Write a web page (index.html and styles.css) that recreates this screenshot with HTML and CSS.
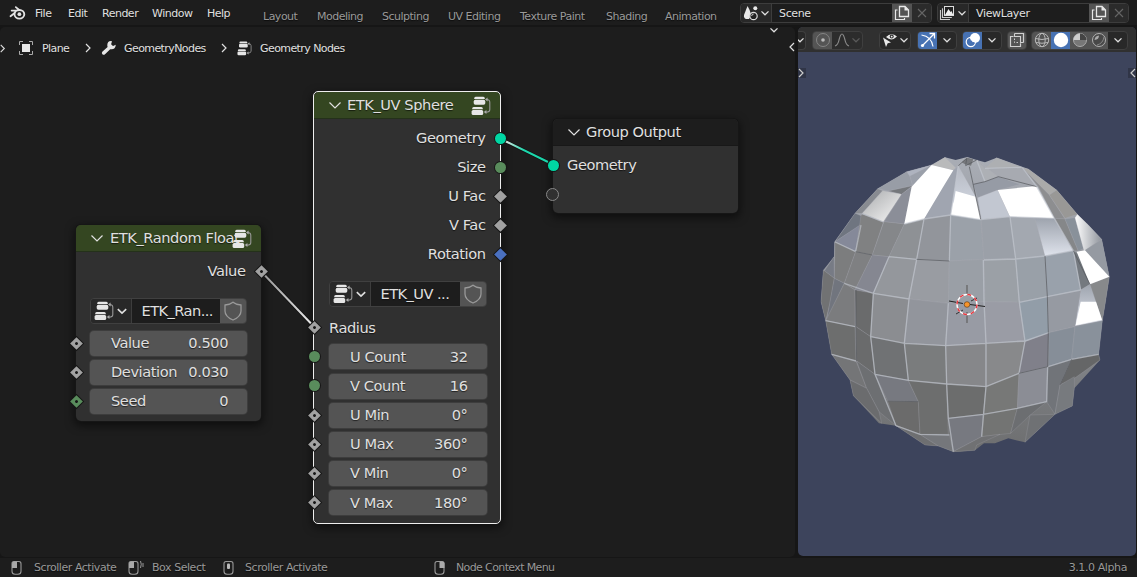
FILE: index.html
```html
<!DOCTYPE html>
<html lang="en">
<head>
<meta charset="utf-8">
<title>Geometry Nodes</title>
<link rel="stylesheet" href="styles.css">
</head>
<body>
<svg class="defs" width="0" height="0">
  <symbol id="chev" viewBox="0 0 10 10"><path d="M1.5 3.4 5 6.8 8.500 3.400" fill="none" stroke="currentColor" stroke-width="1.3"/></symbol>
  <symbol id="fold" viewBox="0 0 16 16"><path d="M2.500 5.500 8 11 13.500 5.500" fill="none" stroke="currentColor" stroke-width="1.200"/></symbol>
  <symbol id="right" viewBox="0 0 10 10"><path d="M3 1 7 5 3 9" fill="none" stroke="currentColor" stroke-width="1.2"/></symbol>
  <symbol id="left" viewBox="0 0 10 10"><path d="M7 1 3 5 7 9" fill="none" stroke="currentColor" stroke-width="1.2"/></symbol>
  <symbol id="tree" viewBox="0 0 20 20">
    <path d="M3.200 3V2.200q0-1.500 1.500-1.500h7.600q1.500 0 1.500 1.500V3z" fill="#e6e6e6"/><rect x="2.7" y="3.8" width="11.6" height="4.900" rx="1.6" fill="#e6e6e6"/>
    <path d="M1.200 13.200v-.8q0-1.500 1.500-1.500h7.600q1.500 0 1.500 1.500v.8z" fill="#e6e6e6"/><rect x=".6" y="14" width="11.6" height="5" rx="1.6" fill="#e6e6e6"/>
    <path d="M15.200 3.5q3.600 0 3.600 2.700v7.200q0 2.700-3.900 2.700" fill="none" stroke="#999" stroke-width="1.1"/><path d="M14 3.500l2.600-2v4zM12.800 16l2.600-2v4z" fill="#aaa"/>
  </symbol>
  <symbol id="shield" viewBox="0 0 20 20"><path d="M10 1.200q3 2.500 8 2.800v6q0 5.600-8 9-8-3.400-8-9V4Q7 3.700 10 1.200z" fill="none" stroke="#999" stroke-width="1.3"/></symbol>
  <symbol id="copy" viewBox="0 0 16 16"><path d="M5.500 1.500h5.500l3.500 3.500v6.500h-9z" fill="none" stroke="#e8e8e8" stroke-width="1.300"/><path d="M10.500 1v4.500h4.500z" fill="#e8e8e8"/><path d="M3.500 5H1.500v9.500h9v-1.500" fill="none" stroke="#e8e8e8" stroke-width="1.200"/></symbol>
  <symbol id="cross" viewBox="0 0 12 12"><path d="M2 2l8 8M10 2l-8 8" stroke="#656565" stroke-width="1.100"/></symbol>
  <symbol id="mouse" viewBox="0 0 12 16"><path d="M3 1.500h5q2 0 2 2.200v7.500q0 3-3 3H4q-3 0-3-3V3.700q0-2.200 2-2.200z" fill="none" stroke="#999" stroke-width="1.100"/></symbol>
</svg>

<header class="topbar">
  <svg class="logo" viewBox="0 0 18 16"><path d="M7.200 1.800l6 4.800M2.800 5.400h8M1.600 11.400l7.400-5.800" stroke="#e3e3e3" stroke-width="1.900" stroke-linecap="round"/><ellipse cx="11" cy="9.400" rx="5.200" ry="4.600" fill="#1d1d1d" stroke="#e3e3e3" stroke-width="2"/><circle cx="11" cy="9.300" r="2" fill="#e3e3e3"/></svg>
  <nav class="menu"><span>File</span><span>Edit</span><span>Render</span><span>Window</span><span>Help</span></nav>
  <nav class="tabs"><span>Layout</span><span>Modeling</span><span>Sculpting</span><span>UV Editing</span><span>Texture Paint</span><span>Shading</span><span>Animation</span></nav>
  <div class="idbox scene">
    <span class="seg pick"><svg width="17" height="16" viewBox="0 0 17 16"><path d="M5.500 1Q9 7 9 10.500L7 14H4Q1.500 13 2 10z" fill="#e8e8e8"/><circle cx="13.300" cy="3.300" r="2" fill="#e8e8e8"/><circle cx="11.500" cy="11" r="3.700" fill="#222" stroke="#ddd" stroke-width="1.200"/><path d="M9.700 11a2 2 0 0 1 2-2" stroke="#ccc" fill="none"/></svg><svg class="c10"><use href="#chev"/></svg></span>
    <span class="seg name">Scene</span><span class="seg btn"><svg width="16" height="16"><use href="#copy"/></svg></span><span class="seg off"><svg width="12" height="12"><use href="#cross"/></svg></span>
  </div>
  <div class="idbox">
    <span class="seg pick"><svg width="17" height="16" viewBox="0 0 17 16"><path d="M1.500 5v9.500h9.500M3.500 3.200v9.300h9.300" fill="none" stroke="#ccc" stroke-width="1.100"/><rect x="5.500" y="1.500" width="9" height="9" fill="#222" stroke="#ddd"/><path d="M6 10l3.500-6 2 3 1-1 1.800 4z" fill="#eee"/></svg><svg class="c10"><use href="#chev"/></svg></span>
    <span class="seg name">ViewLayer</span><span class="seg btn"><svg width="16" height="16"><use href="#copy"/></svg></span><span class="seg off"><svg width="12" height="12"><use href="#cross"/></svg></span>
  </div>
</header>

<main class="workspace">
  <section class="editor">
    <div class="crumbs">
      <svg class="edge" viewBox="0 0 10 10"><use href="#right"/></svg>
      <svg class="plane" viewBox="0 0 14 14"><rect x="3" y="3" width="8" height="8" fill="#e8e8e8"/><path d="M.500 4V.500H4M10 .500h3.500V4M13.500 10v3.500H10M4 13.500H.500V10" fill="none" stroke="#aaa"/></svg>
      <span class="c1">Plane</span>
      <svg class="sep"><use href="#right"/></svg>
      <svg class="wrench" viewBox="0 0 16 16"><path d="M14.800 4.800l-2.800 1.200-1.900-1.800.9-3Q6.500.500 6.300 5q0 1.200.3 1.900L1.300 11.800q-1 1.200.1 2.500 1.400 1.100 2.600 0L9.200 9.200q5.100.9 5.600-4.400z" fill="#e6e6e6"/></svg>
      <span class="c2">GeometryNodes</span>
      <svg class="sep"><use href="#right"/></svg>
      <svg class="small-tree"><use href="#tree"/></svg>
      <span>Geometry Nodes</span>
    </div>
    <svg class="tip down"><use href="#chev"/></svg>
    <svg class="tip side"><use href="#left"/></svg>

    <div class="canvas">
      <article class="node random">
        <h2 class="group"><svg class="fold"><use href="#fold"/></svg><span>ETK_Random Float</span><svg class="tree"><use href="#tree"/></svg></h2>
        <div class="row out">Value<i class="sock dia dot r"></i></div>
        <div class="selector"><span class="ico"><svg class="t20"><use href="#tree"/></svg><svg class="c12"><use href="#chev"/></svg></span><span class="nm">ETK_Ran...</span><span class="fake"><svg class="t20"><use href="#shield"/></svg></span></div>
        <div class="row"><div class="field"><span>Value</span><b>0.500</b></div><i class="sock dia dot"></i></div>
        <div class="row"><div class="field"><span>Deviation</span><b>0.030</b></div><i class="sock dia dot"></i></div>
        <div class="row"><div class="field"><span>Seed</span><b>0</b></div><i class="sock dia dot int"></i></div>
      </article>

      <article class="node sphere selected">
        <h2 class="group"><svg class="fold"><use href="#fold"/></svg><span>ETK_UV Sphere</span><svg class="tree"><use href="#tree"/></svg></h2>
        <div class="row out">Geometry<i class="sock geo r"></i></div>
        <div class="row out">Size<i class="sock int r"></i></div>
        <div class="row out">U Fac<i class="sock dia r"></i></div>
        <div class="row out">V Fac<i class="sock dia r"></i></div>
        <div class="row out">Rotation<i class="sock dia vec r"></i></div>
        <div class="selector"><span class="ico"><svg class="t20"><use href="#tree"/></svg><svg class="c12"><use href="#chev"/></svg></span><span class="nm">ETK_UV ...</span><span class="fake"><svg class="t20"><use href="#shield"/></svg></span></div>
        <div class="row">Radius<i class="sock dia dot"></i></div>
        <div class="row"><div class="field"><span>U Count</span><b>32</b></div><i class="sock int"></i></div>
        <div class="row"><div class="field"><span>V Count</span><b>16</b></div><i class="sock int"></i></div>
        <div class="row"><div class="field"><span>U Min</span><b>0°</b></div><i class="sock dia dot"></i></div>
        <div class="row"><div class="field"><span>U Max</span><b>360°</b></div><i class="sock dia dot"></i></div>
        <div class="row"><div class="field"><span>V Min</span><b>0°</b></div><i class="sock dia dot"></i></div>
        <div class="row"><div class="field"><span>V Max</span><b>180°</b></div><i class="sock dia dot"></i></div>
      </article>

      <article class="node output">
        <h2><svg class="fold"><use href="#fold"/></svg><span>Group Output</span></h2>
        <div class="row">Geometry<i class="sock geo"></i></div>
        <div class="row"><i class="sock empty"></i></div>
      </article>

      <svg class="links" viewBox="0 26 795 531">
        <defs><linearGradient id="lk" x1="0" x2="1"><stop offset="0" stop-color="#e8e8e8"/><stop offset=".45" stop-color="#1bd6ab"/></linearGradient>
        <linearGradient id="lk2" x1="0" x2="1"><stop offset="0" stop-color="#999"/><stop offset="1" stop-color="#e8e8e8"/></linearGradient></defs>
        <path d="M265 275.500L311 323.500M505 141L548 162" stroke="#111" stroke-width="3.500"/>
        <path d="M265 275.500L311 323.500" stroke="url(#lk2)" stroke-width="2"/>
        <path d="M505 141L548 162" stroke="url(#lk)" stroke-width="2"/>
      </svg>
    </div>
  </section>

  <section class="viewport">
    <div class="vhead">
      <span class="g first"><svg class="c10"><use href="#chev"/></svg></span>
      <span class="g dim"><span class="b lit"><svg viewBox="0 0 16 16"><circle cx="8" cy="8" r="6.500" fill="none" stroke="#858585"/><circle cx="8" cy="8" r="1.800" fill="#bbb"/></svg></span><span class="b wide"><svg viewBox="0 0 16 16"><path d="M1 14Q4 13 5 8 6.500 2 8 2T11 8Q12 13 15 14" fill="none" stroke="#888" stroke-width="1.200"/></svg><svg class="c10 faint"><use href="#chev"/></svg></span></span>
      <span class="g vis"><span class="b wide"><svg viewBox="0 0 16 16"><path d="M4 5Q9 0 15 4.500 9.500 10 4 5z" fill="#e8e8e8"/><circle cx="9.700" cy="4.600" r="2" fill="#333"/><circle cx="9.700" cy="4.600" r=".9" fill="#eee"/><path d="M1 5.500l8 5-3.300.8L4 15z" fill="#e8e8e8"/></svg><svg class="c10"><use href="#chev"/></svg></span></span>
      <span class="g giz"><span class="b on"><svg viewBox="0 0 16 16"><path d="M2 14L14 2M9.500 1.500h5v5" fill="none" stroke="#fff" stroke-width="1.300"/><path d="M1.500 3Q11.500 4.500 13 14.500" fill="none" stroke="#fff" stroke-width="1.200"/><circle cx="2.500" cy="13.500" r="1.600" fill="#fff"/></svg></span><span class="b"><svg class="c10"><use href="#chev"/></svg></span></span>
      <span class="g ovl"><span class="b on"><svg viewBox="0 0 16 16"><circle cx="10" cy="6" r="5" fill="#fff"/><circle cx="5.800" cy="10" r="4.600" fill="none" stroke="#fff" stroke-width="1.200"/><path d="M5.200 7.500a5 5 0 0 0 4.600 3.500" stroke="#4a70b5" fill="none"/></svg></span><span class="b"><svg class="c10"><use href="#chev"/></svg></span></span>
      <span class="g xray"><span class="b lit"><svg viewBox="0 0 16 16"><path d="M5.500 1.500h9v9M4.500 4.500H1.500v10h10v-3" fill="none" stroke="#d0d0d0" stroke-width="1.200"/><path d="M5.500 1.500v3h6v6h3M11.500 10.500v1" fill="none" stroke="#d0d0d0" stroke-width="1.100"/><path d="M5.500 6.500v4h5" fill="none" stroke="#d0d0d0" stroke-dasharray="1.500 1.500"/></svg></span></span>
      <span class="g shade">
        <span class="b lit"><svg viewBox="0 0 16 16"><g fill="none" stroke="#b8b8b8"><circle cx="8" cy="8" r="6.700"/><ellipse cx="8" cy="8" rx="3.200" ry="6.700"/><path d="M1.500 6.500q6.500 2 13 0M2 10.500q6 1.500 12 0"/></g></svg></span>
        <span class="b on"><svg viewBox="0 0 16 16"><circle cx="8" cy="8" r="7.200" fill="#fff"/></svg></span>
        <span class="b lit"><svg viewBox="0 0 16 16"><circle cx="8" cy="8" r="6.500" fill="#777" stroke="#aaa"/><path d="M8 8V1.500A6.500 6.500 0 0 0 1.500 8z" fill="#ccc"/><path d="M8 8h6.500A6.500 6.500 0 0 0 8 1.500z" fill="#444"/></svg></span>
        <span class="b lit"><svg viewBox="0 0 16 16"><circle cx="8" cy="8" r="6.500" fill="#484848" stroke="#b0b0b0"/><path d="M3.500 8A5 5 0 0 1 8 3.500Q8 7.500 3.500 8z" fill="#aaa"/><path d="M13 5Q12 11.500 6 13" stroke="#888" fill="none"/></svg></span>
        <span class="b"><svg class="c10"><use href="#chev"/></svg></span>
      </span>
    </div>
    <div class="scene3d">
      <svg class="mesh" viewBox="798 52 338 504">
        <defs>
          <linearGradient id="base" x1="0" y1="0" x2="0" y2="1"><stop offset="0" stop-color="#a9adb5"/><stop offset=".5" stop-color="#8d9096"/><stop offset="1" stop-color="#6d6e6f"/></linearGradient>
          <linearGradient id="sheen" x1="0" y1="0" x2="1" y2="1"><stop offset="0" stop-color="#a8aaac"/><stop offset=".9" stop-color="#f0f0f0"/></linearGradient>
          <linearGradient id="sheen2" x1="0" y1="0" x2="0" y2="1"><stop offset="0" stop-color="#9ea4ae"/><stop offset="1" stop-color="#dfe3ec"/></linearGradient>
          <linearGradient id="sheen3" x1="0" y1="0" x2="1" y2="0"><stop offset="0" stop-color="#fff"/><stop offset="1" stop-color="#8f949c"/></linearGradient>
          <linearGradient id="sheen4" x1="0" y1="0" x2="0" y2="1"><stop offset="0" stop-color="#b5b9c2"/><stop offset=".65" stop-color="#cdd2dc"/><stop offset=".7" stop-color="#fff"/></linearGradient>
        </defs>
        <g transform="translate(810 145) scale(.33333)">
          <path fill="url(#base)" d="M405 37L365 60 290 80 203 131 135 205 73 291 72 335 40 375 33 470 47 527 65 628 120 705 130 752 207 835 258 842 345 900 385 903 430 920 450 920 495 916 522 895 555 895 595 880 645 892 685 855 735 808 787 783 793 730 870 645 866 628 877 527 885 480 898 395 875 283 835 240 802 208 740 135 655 72 560 38 525 52 500 45 472 36 437 45z"/>
          <g class="faces">
            <path fill="#b9babb" d="M405 37L437 68 430 76 365 60z"/>
            <path fill="#aeb3bf" d="M290 80L365 60 300 95z"/>
            <path fill="#989da6" d="M203 131L290 80 300 95 308 122 235 138z"/>
            <path fill="#9ba0aa" d="M300 93L365 60 308 122z"/>
            <path fill="#74777b" d="M235 138L308 122 275 148z"/>
            <path fill="#888b91" d="M203 131L218 137 157 205 135 205z"/>
            <path fill="url(#sheen)" d="M157 205L218 137 275 148 220 230z"/>
            <path fill="#8b8e98" d="M275 148L305 125 283 237 222 230z"/>
            <path fill="#a0a5b0" d="M445 62L422 210 342 222 405 92 435 72z"/>
            <path fill="url(#sheen4)" d="M445 62L497 155 512 225 422 210z"/>
            <path fill="#6f7580" d="M135 205L153 212 153 240 75 290z"/>
            <path fill="#858999" d="M75 290L150 240 137 320z"/>
            <path fill="#808182" d="M153 212L157 207 220 232 187 330 137 320z"/>
            <path fill="#85878a" d="M222 230L283 237 237 335 187 330z"/>
            <path fill="#8e9195" d="M283 237L342 222 320 343 237 335z"/>
            <path fill="#92959b" d="M342 222L422 210 418 348 320 343z"/>
            <path fill="#9ba1a9" d="M422 210L512 225 522 343 418 348z"/>
            <path fill="#7c7d7e" d="M75 290L137 320 103 415 73 400z"/>
            <path fill="#777b85" d="M72 335L73 400 43 378z"/>
            <path fill="#717273" d="M40 375L73 400 60 475 47 527 33 470z"/>
            <path fill="#71757e" d="M73 400L103 415 50 525 60 470z"/>
            <path fill="#7f8082" d="M137 320L187 330 135 435 103 415z"/>
            <path fill="#858791" d="M187 330L237 335 190 445 135 435z"/>
            <path fill="#94979c" d="M237 335L320 343 297 462 190 445z"/>
            <path fill="#999ca2" d="M320 343L418 348 415 475 297 462z"/>
            <path fill="#9a9fa6" d="M418 348L522 343 525 470 415 475z"/>
            <path fill="#7b7c7e" d="M103 415L135 435 135 545 47 527z"/>
            <path fill="#6a6b6c" d="M135 435L190 445 182 575 138 545z"/>
            <path fill="#8b8d91" d="M190 445L297 462 283 595 182 575z"/>
            <path fill="#92959c" d="M297 462L415 475 407 602 283 595z"/>
            <path fill="#989ba4" d="M415 475L525 470 528 595 407 602z"/>
            <path fill="#6d6e6e" d="M47 527L135 545 138 648 65 628z"/>
            <path fill="#6a6b6c" d="M138 545L182 575 195 688 140 648z"/>
            <path fill="#707274" d="M182 575L283 595 295 706 195 688z"/>
            <path fill="#7a7c7d" d="M283 595L407 602 410 717 295 706z"/>
            <path fill="#86878a" d="M407 602L528 595 528 725 410 717z"/>
            <path fill="#747577" d="M65 628L138 648 170 730 120 705z"/>
            <path fill="#6d6f72" d="M140 648L195 688 258 842 207 800 170 730z"/>
            <path fill="#6b6c6e" d="M120 705L170 730 207 800 215 835 130 752z"/>
            <path fill="#777980" d="M195 688L295 706 325 770 233 768z"/>
            <path fill="#6b6b6b" d="M233 768L325 770 330 868 258 842z"/>
            <path fill="#6d6e6e" d="M295 706L410 717 415 870 330 868 325 770z"/>
            <path fill="#6c6d6d" d="M410 717L528 725 520 808 415 820z"/>
            <path fill="#777980" d="M415 820L520 808 515 875 430 920z"/>
            <path fill="#6e6f71" d="M258 842L330 868 385 903 345 900z"/>
            <path fill="#75777b" d="M330 868L418 868 430 920 385 903z"/>
            <path fill="#adb0b5" d="M500 45L565 95 525 110z"/>
            <path fill="#969ba5" d="M490 118L525 110 565 95 630 118 565 135 503 158z"/>
            <path fill="#a7aab1" d="M500 45L525 70 635 67 680 125 565 95z"/>
            <path fill="#adafb2" d="M560 38L635 67 525 70z"/>
            <path fill="#c2c7d1" d="M503 158L563 135 600 215 514 223z"/>
            <path fill="#aaaaa9" d="M637 68L655 72 740 135 718 150z"/>
            <path fill="#8d8e90" d="M637 68L718 150 765 222 733 220 685 125z"/>
            <path fill="#999896" d="M740 135L802 208 765 220 718 150z"/>
            <path fill="#9ba0a8" d="M514 225L600 215 617 342 522 343z"/>
            <path fill="#a3a8b0" d="M600 215L675 220 705 333 617 342z"/>
            <path fill="url(#sheen2)" d="M675 220L733 220 790 317 705 333z"/>
            <path fill="#858789" d="M733 220L765 222 805 318 790 317z"/>
            <path fill="#89919a" d="M765 222L795 218 822 310 805 318z"/>
            <path fill="url(#sheen3)" d="M795 218L802 208 835 240 875 283 822 318z"/>
            <path fill="#959aa2" d="M822 318L875 283 898 395z"/>
            <path fill="#74797f" d="M790 317L803 325 840 418 812 435z"/>
            <path fill="#9ba0a6" d="M522 343L617 342 628 472 525 470z"/>
            <path fill="#99a0a8" d="M617 342L705 333 712 455 628 472z"/>
            <path fill="#99a1ab" d="M705 333L790 317 812 435 712 455z"/>
            <path fill="url(#sheen2)" d="M812 435L840 418 865 465 877 527 795 543z"/>
            <path fill="#87898b" d="M840 418L898 395 885 480 877 527z"/>
            <path fill="#9a9ca5" d="M525 470L628 472 645 588 528 595z"/>
            <path fill="#929da8" d="M628 472L712 455 717 563 645 590z"/>
            <path fill="#969aa2" d="M712 455L812 435 795 545 717 563z"/>
            <path fill="#88898b" d="M528 595L645 590 627 685 528 725z"/>
            <path fill="#80808a" d="M645 590L717 563 713 665 627 685z"/>
            <path fill="#868e98" d="M717 563L795 545 785 643 715 665z"/>
            <path fill="#89919b" d="M795 545L877 527 866 628 785 643z"/>
            <path fill="#777877" d="M528 725L627 685 622 790 520 808z"/>
            <path fill="#8b8d95" d="M627 685L713 665 710 770 622 790z"/>
            <path fill="#717479" d="M713 665L785 643 750 720 735 808 710 770z"/>
            <path fill="#656667" d="M785 643L866 628 870 645 793 700 750 720z"/>
            <path fill="#777a7e" d="M750 720L793 695 793 730 787 783 735 808z"/>
            <path fill="#737473" d="M520 808L622 790 602 865 515 875z"/>
            <path fill="#6c6e71" d="M622 790L710 770 655 815 602 865z"/>
            <path fill="#6f7174" d="M660 810L735 808 645 892z"/>
            <path fill="#707173" d="M430 920L515 875 570 868 500 900 495 916z"/>
          </g>
          <path fill="#fff" d="M365 60L430 76 398 128 342 222 283 237 305 125zM563 135L680 123 733 220 600 215zM425 210L437 138 497 155 512 223zM800 320L825 316 898 395 840 418zM797 541L812 470 858 470 876 524z"/>
          <path class="shine" d="M157 206L220 231M283 237L342 222 422 210 512 224 600 215 733 220M342 222L320 343 297 462 283 595 295 706M237 335L190 445 182 575 195 688 258 842M237 335L320 343M103 415L190 445 297 462M47 527L135 545M182 575L283 595 407 602 528 595 645 588 717 563M65 628L138 648M195 688L295 706 410 717 528 725 627 685M415 475L407 602 410 717 415 820 430 920M258 842L330 868 418 870M415 820L520 808 622 790 710 770 713 665M520 345L522 470 528 595 528 725 515 875M522 345L617 342 705 333 790 317M600 215L617 342 628 472 645 588 627 685M637 68L680 125 733 220 790 317 812 435M628 472L712 455 812 435M715 665L785 643 866 628M75 291L137 320M153 240L137 320M500 45L525 110M525 70L635 67M445 62L422 210 418 348"/>
          <path class="shade-line" d="M137 320L187 330M320 343L418 348M138 435L138 545 140 648M233 768L325 770M565 95L680 125M478 65L512 223M705 333L712 455 715 563 713 665M627 685L713 665M785 643L750 720M790 317L840 418M565 95L525 110 490 118"/>
          <path fill="#77797d" d="M455 52L472 38 490 43 483 62 465 58z"/><path class="shade-line" d="M445 62L470 40 467 62 500 45"/>
        </g>
        <g fill="none"><path d="M949 301l14 2.500M970 304.500l15 2" stroke="#222" stroke-width="1.200"/><path d="M967 285v11M967 312v11" stroke="#666" stroke-width="1.300"/><path d="M963 310l-7 4M971 301l6-3" stroke="#333"/><circle cx="967" cy="304.500" r="10" stroke="#fff" stroke-width="1.400"/><circle cx="967" cy="304.500" r="10" stroke="#e7333b" stroke-width="1.400" stroke-dasharray="3.930"/></g>
        <circle cx="967" cy="304.500" r="2.800" fill="#f7942a" stroke="#553311" stroke-width=".6"/>
      </svg>
      <svg class="vtip l"><use href="#right"/></svg><svg class="vtip r"><use href="#left"/></svg>
    </div>
  </section>
</main>

<footer class="status">
  <span class="hint h1"><svg viewBox="0 0 20 16"><use href="#mouse" width="12" height="16"/><path d="M1 8V3.500q0-2 2-2h3V8z" fill="#aaa"/></svg>Scroller Activate</span>
  <span class="hint h2"><svg viewBox="0 0 20 16"><use href="#mouse" width="12" height="16"/><path d="M1 8V3.500q0-2 2-2h3V8z" fill="#aaa"/><path d="M12.500 1q1.500 3 0 7M15 3v4" stroke="#999" fill="none"/></svg>Box Select</span>
  <span class="hint h3"><svg viewBox="0 0 20 16"><use href="#mouse" width="12" height="16"/><rect x="4" y="3.500" width="3" height="5.500" rx="1" fill="#bbb"/></svg>Scroller Activate</span>
  <span class="hint h4"><svg viewBox="0 0 20 16"><use href="#mouse" width="12" height="16"/><path d="M5.500 8V1.500h3q2 0 2 2V8z" fill="#aaa"/></svg>Node Context Menu</span>
  <span class="version">3.1.0 Alpha</span>
</footer>
</body>
</html>
```
FILE: styles.css
```css
* { box-sizing: border-box; }
body {
  margin: 0; width: 1137px; height: 577px; overflow: hidden;
  display: flex; flex-direction: column;
  background: #161616; color: #e0e0e0;
  font: 11px "DejaVu Sans", sans-serif; letter-spacing: -.5px;
  text-shadow: 0 1px 1px rgba(0,0,0,.6);
}
svg { display: block; flex: none; }
.defs { position: absolute; }
.c10 { width: 10px; height: 10px; }
.c12 { width: 12px; height: 12px; }
.t20 { width: 20px; height: 20px; }

.topbar { height: 26px; flex: none; display: flex; align-items: center; background: #1d1d1d; border-bottom: 1px solid #161616; padding-right: 8px; }
.logo { width: 17px; height: 16px; margin: 1px 0 0 9px; }
.menu { display: grid; grid-template-columns: 33px 34px 50px 55px auto; margin-left: 9px; width: 228px; padding-top: 1px; }
.tabs { display: grid; grid-template-columns: 54px 65px 66px 72px 86px 59px auto; padding-top: 7px; color: #9a9a9a; white-space: nowrap; flex: 1; }
.idbox { display: flex; height: 20px; border: 1px solid #3d3d3d; border-radius: 4px; overflow: hidden; }
.idbox.scene { margin-right: 5px; }
.seg { display: flex; align-items: center; justify-content: center; }
.seg.pick { width: 31px; background: #282828; border-right: 1px solid #3d3d3d; gap: 1px; }
.seg.name { width: 120px; justify-content: flex-start; padding: 1px 0 0 7px; background: #1d1d1d; letter-spacing: -.35px; }
.seg.btn { width: 20px; background: #545454; }
.seg.off { width: 19px; background: #2b2b2b; }

.workspace { flex: 1; display: flex; gap: 3px; min-height: 0; }
.editor { width: 795px; position: relative; background: #1d1d1d; border-radius: 5px; margin-top: 1px; overflow: hidden; }
.crumbs { display: flex; align-items: center; height: 42px; letter-spacing: -.58px; }
.edge { width: 9px; height: 9px; margin: 0 11px 0 -2px; }
.plane { width: 14px; height: 14px; margin: 0 9px 0 1px; }
.c1 { width: 27px; }
.c2 { width: 81px; }
.sep { width: 10px; height: 10px; margin: 0 8px 0 14px; }
.wrench { width: 16px; height: 16px; margin-right: 7px; }
.small-tree { width: 15px; height: 15px; margin-right: 8px; }
.tip { position: absolute; width: 10px; height: 10px; }
.tip.down { left: 769px; top: -2px; }
.tip.side { left: 787px; top: 15px; }

.canvas { position: absolute; inset: -1px 0 0; }
.links { position: absolute; left: 0; top: 0; width: 795px; height: 531px; pointer-events: none; }
.node { position: absolute; background: #303030; border-radius: 5px; font-size: 14.600px; letter-spacing: -.42px; box-shadow: 0 0 0 1px #161616, 0 3px 8px 2px rgba(0,0,0,.5); }
.random { left: 76px; top: 199px; width: 185px; height: 196px; }
.sphere { left: 314px; top: 66px; width: 187px; height: 431px; }
.output { left: 553px; top: 93px; width: 185px; height: 94px; }
.selected::after { content: ""; position: absolute; inset: -1px 0 -1px -1px; border: 1.500px solid #eee; border-radius: 5px; pointer-events: none; }
.node h2 { display: flex; align-items: center; position: relative; height: 27px; margin: 0 0 4.500px; padding-left: 13px; font-size: inherit; font-weight: 400; background: #1d1d1d; border-radius: 5px 5px 0 0; border-bottom: 1px solid #181818; white-space: nowrap; }
.node h2 span { padding-bottom: 2px; }
.node h2.group { background: #344621; border-bottom-color: #24311a; }
.fold { width: 16px; height: 16px; margin-right: 4px; }
.random .fold { margin-right: 5px; }
.node h2 .tree { position: absolute; right: 10px; top: 4px; width: 20px; height: 20px; }
.random h2 .tree { right: 9px; }
.row { position: relative; height: 29.150px; display: flex; align-items: center; padding: 0 14.500px 1px 15px; }
.random .row { padding: 0 14px 1px; }
.output .row { padding: 0 14px 2px; }
.random .row.out, .row.out { justify-content: flex-end; padding: 0 15.500px 2px 0; }
.field { flex: 1; height: 25px; display: flex; justify-content: space-between; align-items: center; background: #545454; border-radius: 4px; padding: 0 19px 1px 21px; margin-top: 1px; box-shadow: 0 0 0 1px #3d3d3d; }
.random .field { padding-bottom: 2px; margin-top: 0; }
.field b { font-weight: 400; }
.selector { display: flex; height: 26px; margin: 11.500px 14.500px 6.500px 15px; border: 1px solid #404040; border-radius: 4px; overflow: hidden; }
.random .selector { margin: 12px 14px 5.500px 14px; }
.ico { width: 41px; display: flex; align-items: center; justify-content: center; gap: 2px; background: #282828; border-right: 1px solid #3d3d3d; }
.nm { flex: 1; display: flex; align-items: center; padding: 0 0 1px 9.500px; background: #1d1d1d; white-space: nowrap; letter-spacing: -.55px; }
.fake { width: 26px; display: flex; align-items: center; justify-content: center; background: #545454; }
.sock { position: absolute; z-index: 2; left: -5.500px; top: 9px; width: 11px; height: 11px; border-radius: 50%; background: #a1a1a1; box-shadow: 0 0 0 1px #161616; }
.sock.r { left: auto; right: -4.500px; }
.sock.dia { width: 9px; height: 9px; left: -4.500px; top: 10px; border-radius: 0; transform: rotate(45deg); }
.sock.dia.r { left: auto; right: -3.500px; }
.random .sock.dia.r { right: -5px; }
.sock.dot::after { content: ""; position: absolute; inset: 3px; border-radius: 50%; background: #161616; }
.sock.int { background: #598c5c; }
.sock.geo { background: #00d6a3; }
.sock.vec { background: #4a70c0; }
.sock.empty { background: #303030; border: 1.500px solid #888; width: 13px; height: 13px; left: -7px; top: 8px; box-shadow: none; }

.viewport { width: 338px; margin: 1px 0; border-radius: 5px; overflow: hidden; display: flex; flex-direction: column; background: #3d445c; }
.vhead { height: 25px; flex: none; background: #303030; display: flex; align-items: center; padding-top: 1px; }
.g { display: flex; height: 19px; border: 1px solid #3f3f3f; border-radius: 4px; overflow: hidden; background: #282828; align-items: center; }
.g.first { width: 8px; border-left: 0; border-radius: 0 4px 4px 0; justify-content: flex-end; margin-right: 6px; }
.g .b { width: 19px; height: 17px; display: flex; align-items: center; justify-content: center; }
.g .b svg:first-child:not(.c10) { width: 16px; height: 16px; }
.g .b.wide { width: 30px; gap: 1px; }
.b.lit { background: #545454; }
.b.on { background: #4772b3; }
.g.dim { background: #2c2c2c; }
.faint { color: #5a5a5a; }
.g.vis { margin-left: 16px; }
.g.giz { margin-left: 6px; }
.g.ovl { margin-left: 5px; }
.g.xray { margin-left: 5px; }
.g.xray .b { width: 18px; }
.g.shade { margin-left: 4px; }
.scene3d { flex: 1; position: relative; min-height: 0; }
.mesh { width: 338px; height: 504px; }
.faces path { stroke: #b0b4bb; stroke-opacity: .25; stroke-width: 2.500; stroke-linejoin: round; }
.shine { fill: none; stroke: #c4c9d2; stroke-opacity: .6; stroke-width: 4; stroke-linejoin: round; }
.shade-line { fill: none; stroke: #55585c; stroke-opacity: .7; stroke-width: 3; }
.vtip { position: absolute; top: 16px; width: 10px; height: 10px; color: #ccc; background: rgba(35,38,50,.5); }
.vtip.l { left: -2px; }
.vtip.r { right: -2px; }

.status { height: 20px; flex: none; display: flex; align-items: center; background: #1d1d1d; color: #999; border-top: 1px solid #161616; padding: 0 10px 0 11px; }
.hint { display: flex; align-items: center; white-space: nowrap; letter-spacing: -.45px; }
.hint svg { width: 20px; height: 16px; margin-right: 3px; }
.h1 { width: 117px; }
.h2 { width: 95px; }
.h2 svg { margin-right: 4px; }
.h3 { width: 211px; }
.h3 svg, .h4 svg { margin-right: 2px; }
.h4 { letter-spacing: -.62px; }
.version { margin-left: auto; letter-spacing: -.4px; }
```
